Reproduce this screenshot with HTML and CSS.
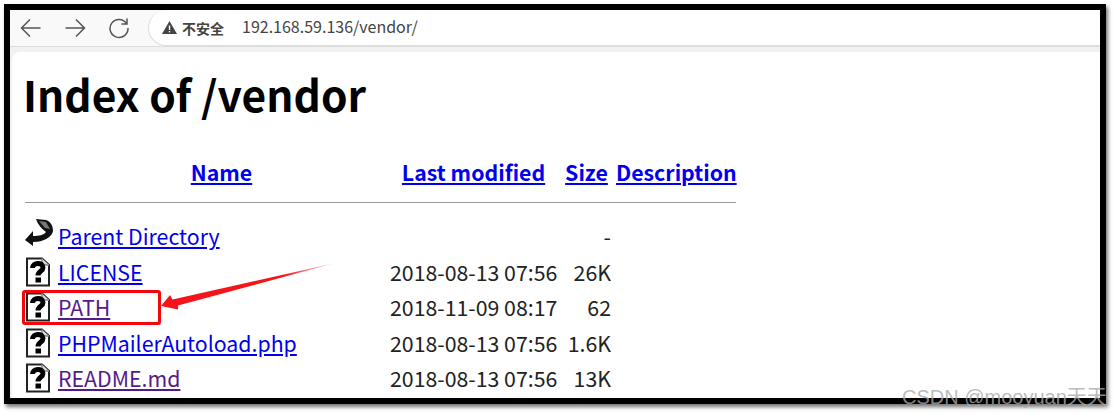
FILE: index.html
```html
<!DOCTYPE html>
<html lang="en">
<head>
    <meta charset="UTF-8">
    <title>Index of /vendor</title>
    <link rel="stylesheet" href="styles.css">
</head>
<body>
    <svg class="defs" width="0" height="0">
        <symbol id="unknown" viewBox="0 0 26 30">
            <path d="M2 1.500H17L24 8V28.500H2Z" fill="#fff" stroke="#222" stroke-width="2"/>
            <path d="M17 1.500V8H24" fill="#ddd" stroke="#888" stroke-width="1.500"/>
            <path d="M7.500 11C7.500 5 18 5 18 10.500C18 14.500 13 14 13 18.500" fill="none" stroke="#000" stroke-width="5"/>
            <rect x="10.500" y="20.500" width="5.500" height="5" fill="#000"/>
        </symbol>
    </svg>

    <div class="shot">
        <div class="frame">
            <div class="toolbar">
                <svg class="nav" width="22" height="20" viewBox="0 0 22 20"><path d="M20.500 10H1.500M10 1.500L1.500 10L10 18.500" fill="none" stroke="#555" stroke-width="1.500"/></svg>
                <svg class="nav" width="22" height="20" viewBox="0 0 22 20"><path d="M1.500 10H20.500M12 1.500L20.500 10L12 18.500" fill="none" stroke="#555" stroke-width="1.500"/></svg>
                <svg class="nav" width="22" height="22" viewBox="0 0 22 22"><path d="M18.500 6.500A9 9 0 1 0 20 11M19 1.500V7H13.500" fill="none" stroke="#555" stroke-width="1.500"/></svg>
                <div class="address">
                    <svg class="warn" width="15" height="13" viewBox="0 0 15 13"><path d="M7.500 0L15 13H0Z" fill="#444"/><rect x="6.800" y="4.500" width="1.400" height="4.500" fill="#fff"/><rect x="6.800" y="10" width="1.400" height="1.400" fill="#fff"/></svg>
                    <span class="insecure">不安全</span>
                    <span class="url">192.168.59.136/vendor/</span>
                </div>
            </div>
            <div class="strip">
                <div class="page">
                    <h1>Index of /vendor</h1>
                    <table class="listing">
                        <tr class="head">
                            <th></th>
                            <th class="name"><a href="#">Name</a></th>
                            <th><a href="#">Last modified</a></th>
                            <th class="size-head"><a href="#">Size</a></th>
                            <th class="desc"><a href="#">Description</a></th>
                        </tr>
                        <tr class="rule-row"><td colspan="5"><hr></td></tr>
                        <tr>
                            <td class="ico">
                                <svg width="28" height="34" viewBox="0 0 28 34">
                                    <path d="M11 0L21 1C26 3 28 7 28 12C27 18 19 23 8 23L8 27L0 21L8 12L8 17C14 17 19 16 21 13C17 10 13 6 11 0Z" fill="#111"/>
                                    <path d="M14 2L21 3L25 10L20 9Z" fill="#777"/>
                                </svg>
                            </td>
                            <td><a href="#">Parent Directory</a></td>
                            <td></td>
                            <td class="size">-</td>
                            <td></td>
                        </tr>
                        <tr>
                            <td class="ico"><svg width="26" height="30"><use href="#unknown"/></svg></td>
                            <td><a href="#">LICENSE</a></td>
                            <td>2018-08-13 07:56</td>
                            <td class="size">26K</td>
                            <td></td>
                        </tr>
                        <tr>
                            <td class="ico"><svg width="26" height="30"><use href="#unknown"/></svg></td>
                            <td><a class="seen" href="#">PATH</a></td>
                            <td>2018-11-09 08:17</td>
                            <td class="size">62</td>
                            <td></td>
                        </tr>
                        <tr>
                            <td class="ico"><svg width="26" height="30"><use href="#unknown"/></svg></td>
                            <td><a href="#">PHPMailerAutoload.php</a></td>
                            <td>2018-08-13 07:56</td>
                            <td class="size">1.6K</td>
                            <td></td>
                        </tr>
                        <tr>
                            <td class="ico"><svg width="26" height="30"><use href="#unknown"/></svg></td>
                            <td><a class="seen" href="#">README.md</a></td>
                            <td>2018-08-13 07:56</td>
                            <td class="size">13K</td>
                            <td></td>
                        </tr>
                        <tr>
                            <td class="ico"><svg width="26" height="30"><use href="#unknown"/></svg></td>
                            <td></td>
                            <td></td>
                            <td></td>
                            <td></td>
                        </tr>
                    </table>
                </div>
            </div>
        </div>

        <div class="callout"></div>
        <svg class="pointer" width="180" height="50" viewBox="0 0 180 50">
            <defs>
                <linearGradient id="fade" x1="0" x2="1" y1="0" y2="0">
                    <stop offset="0" stop-color="#f5141a"/>
                    <stop offset="0.7" stop-color="#f5141a"/>
                    <stop offset="1" stop-color="#f5141a" stop-opacity="0.15"/>
                </linearGradient>
            </defs>
            <path d="M1 46L10 35L12.500 39.500L175 3L18 45.500L18 49.500Z" fill="url(#fade)"/>
        </svg>
        <div class="watermark">CSDN @mooyuan天天</div>
    </div>
</body>
</html>
```

FILE: styles.css
```css
* {
    box-sizing: border-box;
}

html, body {
    margin: 0;
    padding: 0;
    height: 100%;
    overflow: hidden;
    background-color: #fff;
}

body {
    font-family: "Noto Sans CJK SC", "Noto Sans", sans-serif;
    color: #222;
}

.defs {
    display: block;
}

.shot {
    position: relative;
    height: 417px;
    padding: 4px 13px 13px 4px;
}

.frame {
    width: 1102px;
    height: 400px;
    border: 6px solid #000;
    box-shadow: 2px 3px 4px rgba(0, 0, 0, 0.55);
    overflow: hidden;
    background-color: #f9f9f9;
}

.toolbar {
    display: flex;
    align-items: center;
    height: 36px;
    padding-left: 10px;
    background-color: #f9f9f9;
}

.nav {
    margin-right: 22px;
}

.address {
    display: flex;
    align-items: center;
    flex: 1;
    height: 36px;
    margin-left: -4px;
    padding-left: 13px;
    background-color: #fff;
    border-left: 1px solid #ddd;
    border-bottom: 1px solid #ddd;
    border-radius: 18px 0 0 18px;
}

.insecure {
    margin-left: 5px;
    font-size: 14px;
    font-weight: 700;
    color: #444;
}

.url {
    margin-left: 18px;
    padding-bottom: 3px;
    font-size: 16px;
    color: #444;
}

.strip {
    height: 354px;
    padding: 0 0 0 2px;
    border-top: 1px solid #ddd;
    background-color: #f1f1f1;
}

.page {
    height: 100%;
    margin-top: 5px;
    padding-left: 11px;
    background-color: #fff;
    border-radius: 8px 0 0 0;
}

h1 {
    margin: 0;
    padding-top: 11px;
    font-size: 42.500px;
    line-height: 62px;
    font-weight: 700;
    color: #000;
}

.listing {
    margin: 29px 0 0 2px;
    border-collapse: collapse;
    table-layout: fixed;
    width: 711px;
    font-size: 21.300px;
    line-height: 30px;
    color: #222;
}

.listing th, .listing td {
    padding: 0;
    height: 35.500px;
    white-space: nowrap;
}

.listing a {
    color: #0000ee;
}

.listing a.seen {
    color: #551a8b;
}

.listing th:nth-child(1) { width: 33px; }
.listing th:nth-child(2) { width: 332px; }
.listing th:nth-child(3) { width: 167px; }
.listing th:nth-child(4) { width: 55px; }

.listing .name {
    padding-right: 5px;
}

.listing .size-head {
    padding-left: 4px;
}

.listing .desc {
    padding-left: 4px;
    text-align: left;
}

.listing .rule-row td {
    height: 29px;
    vertical-align: top;
}

hr {
    margin: 12px 0 0;
    border: 0;
    border-top: 1px solid #999;
}

.ico {
    vertical-align: middle;
    line-height: 0;
}

.listing .size {
    text-align: right;
    padding-right: 1px;
}

.callout {
    position: absolute;
    left: 22px;
    top: 290px;
    width: 139px;
    height: 35px;
    border: 3px solid #f5060c;
    border-radius: 3px;
}

.pointer {
    position: absolute;
    left: 160px;
    top: 260px;
}

.watermark {
    position: absolute;
    left: 902px;
    top: 383px;
    font-family: "Liberation Sans", "Noto Sans CJK SC", sans-serif;
    font-size: 20px;
    line-height: 28px;
    white-space: nowrap;
    color: rgba(170, 170, 170, 0.8);
}
```
